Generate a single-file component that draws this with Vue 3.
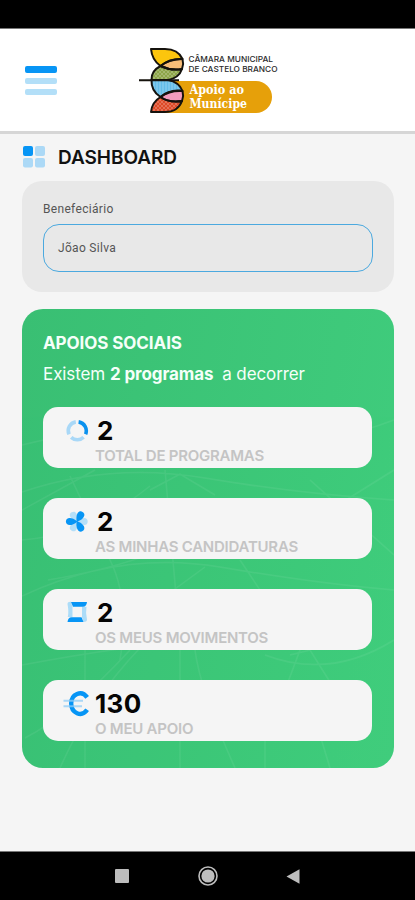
<template>
	<div class="screen">
		<div class="status-bar"></div>

		<header class="header">
			<button class="menu-button" type="button" aria-label="Menu">
				<span class="menu-line active"></span>
				<span class="menu-line"></span>
				<span class="menu-line"></span>
			</button>

			<svg class="logo" viewBox="138 46 144 70" width="144" height="70">
				<defs>
					<pattern id="lines" width="3" height="3" patternUnits="userSpaceOnUse">
						<path d="M1 0V3" stroke="#fff" stroke-width="0.7" opacity="0.45" />
					</pattern>
					<pattern id="weave" width="4" height="4" patternUnits="userSpaceOnUse">
						<path d="M0 0L4 4M4 0L0 4" stroke="#fff" stroke-width="0.7" opacity="0.3" />
					</pattern>
				</defs>
				<path d="M164 81H256A16 16 0 0 1 256 113H164Z" fill="#e6a00a" />
				<path v-for="wing in wings" :key="wing.d" :d="wing.d" :fill="wing.fill" />
				<path :d="wings[2].d" fill="url(#weave)" />
				<path :d="wings[3].d" fill="url(#lines)" />
				<path :d="wings[5].d" fill="url(#weave)" />
				<g fill="none" stroke="#15120d" stroke-width="2" stroke-linejoin="round">
					<path v-for="wing in wings" :key="wing.d" :d="wing.d" />
					<path d="M139 80.3H179" />
				</g>
				<g class="logo-name">
					<text x="188.5" y="61.8" textLength="84.5" lengthAdjust="spacingAndGlyphs">CÂMARA MUNICIPAL</text>
					<text x="188.5" y="71.5" textLength="89" lengthAdjust="spacingAndGlyphs">DE CASTELO BRANCO</text>
				</g>
				<g class="logo-service">
					<text x="189.5" y="93.8" textLength="54.5" lengthAdjust="spacingAndGlyphs">Apoio ao</text>
					<text x="189.5" y="108.2" textLength="57.5" lengthAdjust="spacingAndGlyphs">Munícipe</text>
				</g>
			</svg>
		</header>

		<main class="content">
			<div class="page-title">
				<svg width="22" height="22" viewBox="0 0 22 22">
					<rect x="0" y="0" width="10" height="10" rx="2" fill="#0795f5" />
					<rect x="12" y="0" width="10" height="10" rx="2" fill="#acd9f6" />
					<rect x="0" y="12" width="10" height="9.5" rx="2" fill="#acd9f6" />
					<rect x="12" y="12" width="10" height="9.5" rx="2" fill="#acd9f6" />
				</svg>
				<h1>DASHBOARD</h1>
			</div>

			<section class="beneficiary">
				<label>Benefeciário</label>
				<div class="beneficiary-field">Jõao Silva</div>
			</section>

			<section class="supports">
				<svg class="supports-pattern" viewBox="22 309 372 459" width="372" height="459">
					<path
						d="M22 445Q120 420 210 438T394 420M22 492Q110 462 205 478T394 500M22 596Q120 550 220 567T394 590M22 540Q90 535 150 486M48 580Q170 560 230 510M22 665Q130 645 200 640M25 738Q70 715 130 650M60 768Q90 700 140 648M85 768V650M180 768V640L165 470M235 768Q200 690 195 650M265 768V740M70 476L110 560Q130 600 120 660M150 490L180 474L215 495M240 560L300 650L285 690M310 480L394 555M330 768L320 735M394 640Q330 680 265 655M290 655L310 650L335 690M22 510L95 470M205 567L160 600M330 510L394 470"
					/>
				</svg>
				<h2>APOIOS SOCIAIS</h2>
				<p class="summary">
					<span>Existem</span> <strong>2 programas</strong> <span class="summary-end">a decorrer</span>
				</p>

				<div class="cards">
					<article v-for="card in cards" :key="card.label" class="card">
						<div class="card-head" :class="{ wide: card.icon === 'euro' }">
							<svg v-if="card.icon === 'ring'" width="24" height="24" viewBox="0 0 24 24">
								<g fill="none" stroke-width="3.6">
									<path d="M13.6 2.9A9 9 0 0 1 20.6 15.2" stroke="#0a91ee" />
									<path d="M18.6 18.2A9 9 0 0 1 6.2 18.4" stroke="#a9d8f7" />
									<path d="M4 15.4A9 9 0 0 1 10.8 2.9" stroke="#a9d8f7" />
								</g>
							</svg>
							<svg v-else-if="card.icon === 'flower'" width="24" height="24" viewBox="0 0 24 24">
								<path
									v-for="angle in [90, 210, 330]"
									:key="'light' + angle"
									d="M12 11.5C7 6 7.5 .8 12 .8S17 6 12 11.5Z"
									:transform="`rotate(${angle} 12 11.5)`"
									fill="#b5dff8"
								/>
								<path
									v-for="angle in [30, 150, 270]"
									:key="'dark' + angle"
									d="M12 12C6.5 5.5 8 .4 12 .4S17.5 5.5 12 12Z"
									:transform="`rotate(${angle} 12 11.5)`"
									fill="#0795f5"
								/>
							</svg>
							<svg v-else-if="card.icon === 'frame'" width="24" height="24" viewBox="0 0 24 24">
								<path
									d="M2.5 3Q2.5 .6 6 .8L7.5 5.6V16H2.8Q4 11 2.5 3ZM22 18.5Q22 21 18.5 21L17 16.4V5.8H21.5Q20.5 11 22 18.5Z"
									fill="#acdcf8"
								/>
								<path d="M6 1H22Q21.5 5.8 18 5.8H8ZM18.5 21H2.5Q3 16.2 6.5 16.2H16.5Z" fill="#0795f5" />
							</svg>
							<svg v-else width="28" height="28" viewBox="0 0 28 28">
								<path d="M24.2 7.4C18.5 -.6 8.2 4.2 8.2 13.6S18.5 27.8 24.2 19.8" fill="none" stroke="#0795f5" stroke-width="4.4" />
								<path d="M.5 10.8H20M.5 16.2H19" stroke="#91cdf7" stroke-width="2" opacity="0.75" />
							</svg>
							<span class="card-value">{{ card.value }}</span>
						</div>
						<div class="card-label">{{ card.label }}</div>
					</article>
				</div>
			</section>
		</main>

		<nav class="nav-bar">
			<svg width="14" height="14" viewBox="0 0 14 14"><rect width="14" height="14" rx="1" fill="#bdbdbd" /></svg>
			<svg width="20" height="20" viewBox="0 0 20 20">
				<circle cx="10" cy="10" r="9" fill="none" stroke="#bdbdbd" stroke-width="1.6" />
				<circle cx="10" cy="10" r="6.6" fill="#bdbdbd" />
			</svg>
			<svg width="14" height="15" viewBox="0 0 14 15"><path d="M0.5 7.5L13.5 0.3V14.7Z" fill="#bdbdbd" /></svg>
		</nav>
	</div>
</template>

<script setup>
const cards = [
	{ icon: 'ring', value: '2', label: 'TOTAL DE PROGRAMAS' },
	{ icon: 'flower', value: '2', label: 'AS MINHAS CANDIDATURAS' },
	{ icon: 'frame', value: '2', label: 'OS MEUS MOVIMENTOS' },
	{ icon: 'euro', value: '130', label: 'O MEU APOIO' }
];

// Butterfly wings, top to bottom
const wings = [
	{ d: 'M151 49H165Q178 49 182.5 59Q169 59 160.5 66Q152 60 151 49Z', fill: '#fcc50d' },
	{ d: 'M160.5 66Q170 58 182.5 59Q184 64 182 69Q171 71 160.5 66Z', fill: '#f8bd78' },
	{ d: 'M151.5 80Q151 71 160.5 66Q171 71 182 69Q179 78 168 80Z', fill: '#8da548' },
	{ d: 'M151.5 80H168Q179 82 182.5 91Q170 90 160.5 97Q151 91 151.5 80Z', fill: '#62bce8' },
	{ d: 'M160.5 97Q170 89 182.5 91Q184 96 182 101Q169 103 160.5 97Z', fill: '#f29bbd' },
	{ d: 'M151 112Q152 102 160.5 97Q169 103 182 101Q178 112 165 112Z', fill: '#dd4a27' }
];
</script>

<style>
body {
	margin: 0;
}
</style>

<style scoped>
.screen {
	display: flex;
	flex-direction: column;
	width: 415px;
	height: 900px;
	overflow: hidden;
	background: #f5f5f5;
	font-family: Inter, Roboto, sans-serif;
}

.status-bar {
	flex: none;
	height: 28px;
	background: #000;
	border-bottom: 1px solid #777;
}

.header {
	flex: none;
	display: flex;
	box-sizing: border-box;
	height: 105px;
	padding: 17px 0 0 25px;
	background: #fff;
	border-bottom: 3px solid #d6d6d6;
}

.menu-button {
	display: flex;
	flex-direction: column;
	gap: 5px;
	width: 32px;
	margin: 20px 81px 0 0;
	padding: 0;
	border: 0;
	background: none;
}

.menu-line {
	height: 6px;
	border-radius: 2px;
	background: #b3dff8;
}

.menu-line.active {
	height: 7px;
	background: #0795f5;
}

.logo-name {
	font: 500 8px Inter, sans-serif;
	fill: #2b2b2b;
}

.logo-service {
	font: bold 12px "DejaVu Serif", serif;
	fill: #fff;
}

.content {
	flex: 1;
	padding: 12px 21px 0 22px;
}

.page-title {
	display: flex;
	align-items: center;
	gap: 13px;
	height: 22px;
	padding-left: 1px;
}

h1 {
	margin: 0;
	font-size: 19px;
	font-weight: 600;
	letter-spacing: -0.05px;
	color: #111;
}

.beneficiary {
	box-sizing: border-box;
	height: 111px;
	margin-top: 13px;
	padding: 20px 21px 0;
	border-radius: 20px;
	background: #e8e8e8;
}

.beneficiary label {
	display: block;
	height: 23px;
	font: 12px/16px Roboto, sans-serif;
	letter-spacing: 0.32px;
	color: #555;
}

.beneficiary-field {
	box-sizing: border-box;
	height: 48px;
	padding-left: 14px;
	border: 1px solid #4ba9df;
	border-radius: 16px;
	font: 12px/46px Roboto, sans-serif;
	letter-spacing: 0.3px;
	color: #555;
}

.supports {
	position: relative;
	box-sizing: border-box;
	height: 459px;
	margin-top: 17px;
	padding: 23px 22px 0 21px;
	border-radius: 21px;
	overflow: hidden;
	background: linear-gradient(100deg, #39bf73, #40cd7d);
	color: #f5fff9;
}

.supports-pattern {
	position: absolute;
	inset: 0;
	fill: none;
	stroke: #fff;
	stroke-width: 1.5;
	opacity: 0.06;
}

h2 {
	position: relative;
	margin: 0;
	font-size: 17px;
	font-weight: 700;
	line-height: 22px;
	letter-spacing: -0.08px;
}

.summary {
	position: relative;
	margin: 9px 0 0;
	font-size: 17px;
	line-height: 22px;
	letter-spacing: -0.09px;
	white-space: nowrap;
}

.summary-end {
	margin-left: 4px;
}

.cards {
	position: relative;
	display: flex;
	flex-direction: column;
	gap: 30px;
	margin-top: 22px;
}

.card {
	box-sizing: border-box;
	height: 61px;
	padding: 11px 0 0 22px;
	border-radius: 15px;
	background: #f5f5f5;
}

.card-head {
	display: flex;
	align-items: center;
	gap: 8px;
	height: 25px;
}

.card-head.wide {
	gap: 4px;
	margin-left: -2px;
}

.card-value {
	font-size: 26px;
	font-weight: 700;
	line-height: 25px;
	letter-spacing: 0.4px;
	color: #050505;
}

.card-label {
	margin: 5px 0 0 30px;
	font-size: 15px;
	font-weight: 600;
	line-height: 16px;
	letter-spacing: -0.24px;
	white-space: nowrap;
	color: #c4c4c4;
}

.nav-bar {
	flex: none;
	display: flex;
	align-items: center;
	justify-content: space-between;
	box-sizing: border-box;
	height: 49px;
	padding: 0 115px;
	border-top: 1px solid #777;
	background: #000;
}
</style>
